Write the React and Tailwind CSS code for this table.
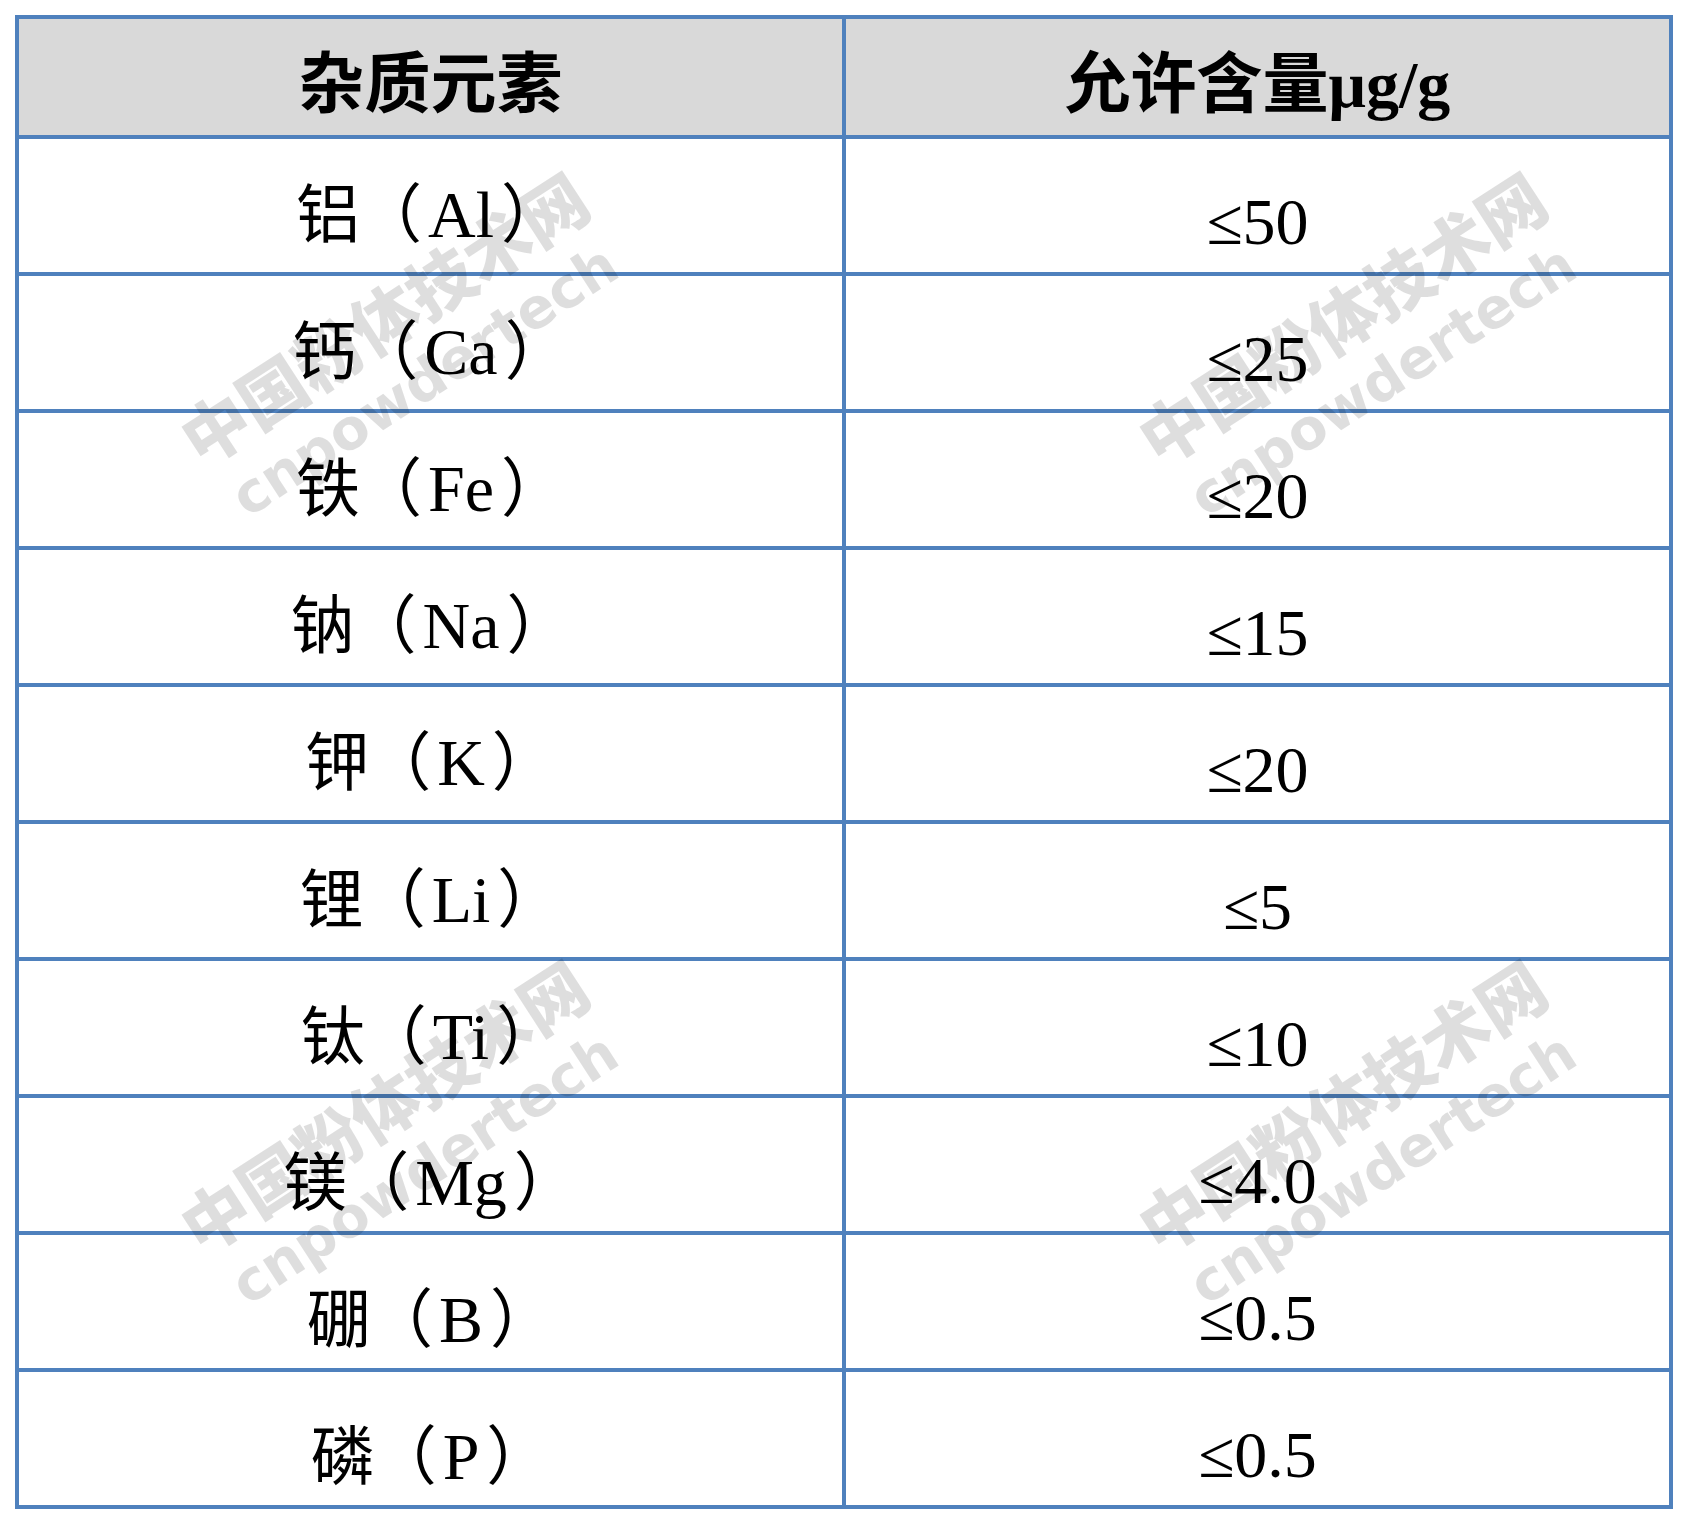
import React from "react";

const rows = [
  { zh: "铝", el: "Al", v: "≤50", low: false },
  { zh: "钙", el: "Ca", v: "≤25", low: false },
  { zh: "铁", el: "Fe", v: "≤20", low: false },
  { zh: "钠", el: "Na", v: "≤15", low: false },
  { zh: "钾", el: "K", v: "≤20", low: false },
  { zh: "锂", el: "Li", v: "≤5", low: false },
  { zh: "钛", el: "Ti", v: "≤10", low: false },
  { zh: "镁", el: "Mg", v: "≤4.0", low: true },
  { zh: "硼", el: "B", v: "≤0.5", low: true },
  { zh: "磷", el: "P", v: "≤0.5", low: true },
];

const serif = { fontFamily: '"Liberation Serif", "Noto Sans CJK SC", serif' };

function Watermark({ className }) {
  return (
    <div
      className={
        "pointer-events-none absolute flex -translate-x-1/2 -translate-y-1/2 rotate-[-33deg] flex-col items-center gap-[16px] whitespace-nowrap text-[rgba(0,0,0,0.13)] " +
        className
      }
    >
      <div
        className="text-[67px] font-black leading-none"
        style={{ fontFamily: '"Noto Sans CJK SC", sans-serif' }}
      >
        中国粉体技术网
      </div>
      <div
        className="text-[56px] font-bold leading-none"
        style={{ fontFamily: '"DejaVu Sans", sans-serif' }}
      >
        cnpowdertech
      </div>
    </div>
  );
}

export default function App() {
  return (
    <div className="relative min-h-[1521px] w-[1688px] bg-white pt-[15px] pl-[15px]">
      <div className="w-[1658px] border-4 border-[#4f81bd] text-black" style={serif}>
        <div className="flex h-[120px] border-b-4 border-[#4f81bd] bg-[#d9d9d9] text-[66px] font-bold leading-none">
          <div className="flex w-[827px] items-center justify-center border-r-4 border-[#4f81bd] pt-[16px]">
            杂质元素
          </div>
          <div className="flex flex-1 items-center justify-center pt-[16px]">
            允许含量μg/g
          </div>
        </div>
        {rows.map((r, i) => (
          <div
            key={i}
            className={
              "flex " +
              (i < rows.length - 1 ? "h-[137px] border-b-4 border-[#4f81bd]" : "h-[133px]")
            }
          >
            <div
              className={
                "flex w-[827px] items-center justify-center border-r-4 border-[#4f81bd] text-[64px] leading-none " +
                (r.low ? "pt-[36px]" : "pt-[18px]")
              }
            >
              <div className="whitespace-nowrap">
                <span>{r.zh}</span>
                <span className="ml-[-2px] mr-[6px]">（</span>
                <span className="text-[66px]">{r.el}</span>
                <span className="ml-[7px]">）</span>
              </div>
            </div>
            <div className="flex flex-1 items-center justify-center pt-[32px] text-[66px] leading-none">
              {r.v}
            </div>
          </div>
        ))}
      </div>
      <Watermark className="left-[402px] top-[346px]" />
      <Watermark className="left-[1360px] top-[346px]" />
      <Watermark className="left-[402px] top-[1134px]" />
      <Watermark className="left-[1360px] top-[1134px]" />
    </div>
  );
}
